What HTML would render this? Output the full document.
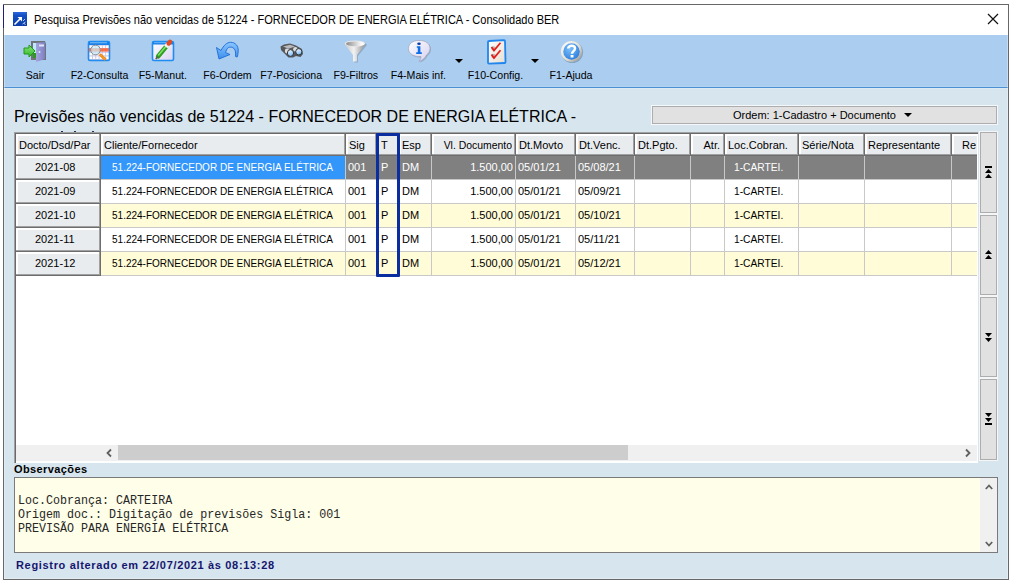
<!DOCTYPE html><html><head><meta charset="utf-8"><style>
html,body{margin:0;padding:0;}
body{width:1013px;height:584px;position:relative;overflow:hidden;background:#fff;font-family:"Liberation Sans",sans-serif;}
div{position:absolute;box-sizing:border-box;}
.t{font-size:11px;line-height:20px;white-space:nowrap;color:#000;}
svg{position:absolute;overflow:visible;}
</style></head><body>

<div style="left:3px;top:4px;width:1006px;height:576px;border:1px solid #676767;background:#d6e5ee;"></div>
<div style="left:3px;top:5px;width:1px;height:23px;background:#1f1f7a;"></div>
<div style="left:4px;top:5px;width:1004px;height:30px;background:#fff;"></div>
<svg style="left:13px;top:12px" width="14" height="14" viewBox="0 0 14 14">
<defs><linearGradient id="gti" x1="0" y1="0" x2="0" y2="1"><stop offset="0" stop-color="#2a68dc"/><stop offset="0.25" stop-color="#1450c4"/><stop offset="1" stop-color="#0b3ca8"/></linearGradient></defs>
<rect x="0" y="0" width="14" height="14" fill="url(#gti)"/>
<path d="M1.5 12.5 L8 6" stroke="#fff" stroke-width="1.6"/>
<path d="M4.5 5 L9 5 L9 9.5 Z" fill="#fff"/>
<path d="M10 9 l2 -2 M9.5 12 l3 -2 M11 11.5 l1.5 1" stroke="#b9cdf0" stroke-width="1"/>
</svg>
<div class="t" style="left:34px;top:10px;font-size:12px;transform:scaleX(0.918);transform-origin:0 0;">Pesquisa Previsões não vencidas de 51224 - FORNECEDOR DE ENERGIA ELÉTRICA - Consolidado BER</div>
<svg style="left:987px;top:13px" width="12" height="12" viewBox="0 0 12 12">
<path d="M1 1 L11 11 M11 1 L1 11" stroke="#111" stroke-width="1.2"/>
</svg>
<div style="left:4px;top:35px;width:1004px;height:52px;background:#abcdef;"></div>
<div style="left:4px;top:86px;width:1004px;height:1px;background:#b3d3f3;"></div>
<div style="left:4px;top:87px;width:1004px;height:1px;background:#4b90d0;"></div>
<div style="left:4px;top:88px;width:1004px;height:1px;background:#dcebf3;"></div>
<div class="t" style="left:-24.8px;width:120px;text-align:center;top:65px;font-size:10.6px;">Sair</div>
<div class="t" style="left:39.5px;width:120px;text-align:center;top:65px;font-size:10.6px;">F2-Consulta</div>
<div class="t" style="left:102.8px;width:120px;text-align:center;top:65px;font-size:10.6px;">F5-Manut.</div>
<div class="t" style="left:167.5px;width:120px;text-align:center;top:65px;font-size:10.6px;">F6-Ordem</div>
<div class="t" style="left:231.2px;width:120px;text-align:center;top:65px;font-size:10.6px;">F7-Posiciona</div>
<div class="t" style="left:295.8px;width:120px;text-align:center;top:65px;font-size:10.6px;">F9-Filtros</div>
<div class="t" style="left:358.4px;width:120px;text-align:center;top:65px;font-size:10.6px;">F4-Mais inf.</div>
<div class="t" style="left:435.5px;width:120px;text-align:center;top:65px;font-size:10.6px;">F10-Config.</div>
<div class="t" style="left:511.0px;width:120px;text-align:center;top:65px;font-size:10.6px;">F1-Ajuda</div>
<svg style="left:0;top:0" width="1013" height="100" viewBox="0 0 1013 100">
<defs>
<linearGradient id="gwin" x1="0" y1="0" x2="1" y2="1"><stop offset="0" stop-color="#ffffff"/><stop offset="1" stop-color="#d8d4f4"/></linearGradient>
<linearGradient id="garr" x1="0" y1="0" x2="0" y2="1"><stop offset="0" stop-color="#8fe27a"/><stop offset="1" stop-color="#2fb82a"/></linearGradient>
<linearGradient id="gdoor" x1="0" y1="0" x2="1" y2="0"><stop offset="0" stop-color="#a4a6e0"/><stop offset="1" stop-color="#7d7fc2"/></linearGradient>
<radialGradient id="ghelp" cx="0.4" cy="0.35" r="0.7"><stop offset="0" stop-color="#7cc0fa"/><stop offset="1" stop-color="#2a7ee0"/></radialGradient>
<linearGradient id="gfun" x1="0" y1="0" x2="1" y2="0"><stop offset="0" stop-color="#a8a8a8"/><stop offset="0.6" stop-color="#f4f4f4"/><stop offset="1" stop-color="#bdbdbd"/></linearGradient>
<linearGradient id="garc" x1="0" y1="0" x2="0" y2="1"><stop offset="0" stop-color="#8cc6ff"/><stop offset="1" stop-color="#3a8fec"/></linearGradient>
<linearGradient id="gfun2" x1="0" y1="0" x2="1" y2="0"><stop offset="0" stop-color="#c8c8c8"/><stop offset="0.45" stop-color="#f2f2f2"/><stop offset="1" stop-color="#8e8e8e"/></linearGradient>
<linearGradient id="gfun3" x1="0" y1="0" x2="1" y2="0"><stop offset="0" stop-color="#8a8a8a"/><stop offset="0.8" stop-color="#f4f4f4"/><stop offset="1" stop-color="#ffffff"/></linearGradient>
<linearGradient id="ginfo" x1="0" y1="0" x2="1" y2="1"><stop offset="0" stop-color="#ffffff"/><stop offset="1" stop-color="#d4d0f0"/></linearGradient>
<linearGradient id="gchk" x1="0" y1="0" x2="1" y2="1"><stop offset="0" stop-color="#ffffff"/><stop offset="1" stop-color="#e6ddd0"/></linearGradient>
<linearGradient id="gring" x1="0" y1="0" x2="1" y2="1"><stop offset="0" stop-color="#ffffff"/><stop offset="0.6" stop-color="#dedad0"/><stop offset="1" stop-color="#8c8a84"/></linearGradient>
<linearGradient id="glens" x1="0" y1="0" x2="0.4" y2="1"><stop offset="0" stop-color="#ffffff"/><stop offset="0.5" stop-color="#bfe0ff"/><stop offset="1" stop-color="#80bdf5"/></linearGradient>
</defs>
<!-- Sair: door -->
<path d="M31 41 L45 41 L46 44 L46 60 L31 60 Z" fill="#707478"/>
<rect x="33" y="43" width="4" height="15" fill="#bfe8ff"/>
<rect x="33" y="53" width="4" height="5" fill="#2e9a22"/>
<path d="M36 43 L45 42 L45 59 L36 62 Z" fill="url(#gdoor)"/>
<rect x="39" y="44.5" width="5" height="2" fill="#e4e6ff"/>
<circle cx="39.5" cy="52" r="1" fill="#dddfff"/>
<path d="M24 48 L29 48 L29 45 L35 51 L29 57 L29 54 L24 54 Z" fill="url(#garr)" stroke="#1f9a14" stroke-width="1"/>
<!-- F2: consulta -->
<rect x="88.5" y="41.5" width="21" height="19" rx="1.5" fill="#c9c6e6" stroke="#1e8cf0" stroke-width="1.6"/>
<rect x="89" y="42" width="20" height="3" fill="#1a7fe6"/>
<rect x="90" y="42.4" width="17" height="0.8" fill="#8fd0ff"/>
<rect x="89.6" y="45.6" width="2.4" height="2.6" fill="#ffffff"/><rect x="92.9" y="45.6" width="2.4" height="2.6" fill="#ffffff"/><rect x="96.2" y="45.6" width="2.4" height="2.6" fill="#ffffff"/><rect x="99.5" y="45.6" width="2.4" height="2.6" fill="#ffffff"/><rect x="102.8" y="45.6" width="2.4" height="2.6" fill="#ffffff"/><rect x="106.1" y="45.6" width="2.4" height="2.6" fill="#ffffff"/><rect x="89.6" y="49.2" width="2.4" height="2.6" fill="#ffffff"/><rect x="92.9" y="49.2" width="2.4" height="2.6" fill="#ffffff"/><rect x="96.2" y="49.2" width="2.4" height="2.6" fill="#ffffff"/><rect x="99.5" y="49.2" width="2.4" height="2.6" fill="#ffffff"/><rect x="102.8" y="49.2" width="2.4" height="2.6" fill="#ffffff"/><rect x="106.1" y="49.2" width="2.4" height="2.6" fill="#ffffff"/><rect x="89.6" y="52.8" width="2.4" height="2.6" fill="#ffffff"/><rect x="92.9" y="52.8" width="2.4" height="2.6" fill="#ffffff"/><rect x="96.2" y="52.8" width="2.4" height="2.6" fill="#ffffff"/><rect x="99.5" y="52.8" width="2.4" height="2.6" fill="#ffffff"/><rect x="102.8" y="52.8" width="2.4" height="2.6" fill="#ffffff"/><rect x="106.1" y="52.8" width="2.4" height="2.6" fill="#ffffff"/><rect x="89.6" y="56.4" width="2.4" height="2.6" fill="#ffffff"/><rect x="92.9" y="56.4" width="2.4" height="2.6" fill="#ffffff"/><rect x="96.2" y="56.4" width="2.4" height="2.6" fill="#ffffff"/><rect x="99.5" y="56.4" width="2.4" height="2.6" fill="#ffffff"/><rect x="102.8" y="56.4" width="2.4" height="2.6" fill="#ffffff"/><rect x="106.1" y="56.4" width="2.4" height="2.6" fill="#ffffff"/>
<rect x="89" y="48.2" width="20" height="3.4" fill="#ff5a2a" fill-opacity="0.85"/>
<circle cx="95.5" cy="50" r="4.8" fill="#c8eefa" fill-opacity="0.7" stroke="#8a8f99" stroke-width="1"/>
<path d="M99.8 54.2 L105.5 59.8" stroke="#f08a1a" stroke-width="3"/>
<path d="M101 55.4 L104.6 59" stroke="#ffd040" stroke-width="1" stroke-dasharray="1 1"/>
<!-- F5: manut -->
<rect x="152.5" y="41.5" width="21" height="19" rx="1.5" fill="url(#gwin)" stroke="#1e8cf0" stroke-width="1.6"/>
<rect x="153" y="42" width="20" height="2.5" fill="#1a7fe6"/>
<rect x="154" y="42.3" width="12" height="0.8" fill="#7cc0ff"/>
<path d="M158.2 56.2 L166.2 46.6" stroke="#2f9c22" stroke-width="4.6" stroke-linecap="round"/>
<path d="M158.6 55 L165.8 46.4" stroke="#7ee06a" stroke-width="1.6" stroke-linecap="round"/>
<path d="M165.8 46.8 L168.2 43.9" stroke="#f4f4f4" stroke-width="4.4"/>
<path d="M168.6 43.5 L170 41.8" stroke="#e24a22" stroke-width="4.4" stroke-linecap="round"/>
<path d="M155.8 59 L157.6 56.8" stroke="#5a5a5a" stroke-width="1.6"/>
<!-- F6: ordem arrow -->
<path d="M221 50.5 C223.5 45.5 227 42.3 230.5 42.3 C235.5 42.3 238.5 46 238.2 51 C238 54 237.6 56 237.2 57 L235.6 56.5 C235.8 53 235.5 50 234 48.5 C232.5 47 230 46.8 228.5 47.5 C227 48.3 226 51 225.5 52.5 L230 54.5 L219 59 L216.5 47.5 Z" fill="url(#garc)" stroke="#1c6ad6" stroke-width="0.9" stroke-linejoin="round"/>
<!-- F7: binoculars -->
<path d="M280.5 46.5 L284 44.5 L290 43.5 L296 45.5 L302 49 L303 54 L300.5 57 L296 56 L293 57.5 L288.5 57.5 L284 53 L281 50 Z" fill="#55575b"/>
<path d="M283 46.5 L290 44.8 L295 46.5 L288.5 48.8 Z" fill="#b8b9bb"/>
<ellipse cx="287" cy="51" rx="2.2" ry="2.4" fill="#dcdcdc"/>
<ellipse cx="295.3" cy="49.3" rx="2.2" ry="2.2" fill="#dcdcdc"/>
<ellipse cx="290.5" cy="53" rx="3.1" ry="3.4" fill="url(#glens)" stroke="#333538" stroke-width="1"/>
<ellipse cx="298.8" cy="51.8" rx="3.1" ry="3.2" fill="url(#glens)" stroke="#333538" stroke-width="1"/>
<!-- F9: funnel -->
<path d="M346 45 C346 41.5 367 41.5 367 45 L358 56 L358 62.5 L354.5 62.5 L354.5 56 Z" fill="#7f95aa" fill-opacity="0.6"/>
<path d="M344.5 44 C344.5 40 365.5 40 365.5 44 L357 55 L357 61.5 L353 61.5 L353 55 Z" fill="url(#gfun2)"/>
<ellipse cx="355" cy="43.6" rx="10.2" ry="3.2" fill="#e8e8e8"/>
<ellipse cx="355" cy="43.8" rx="9" ry="2.4" fill="url(#gfun3)"/>
<!-- F4: info bubble -->
<path d="M420 41.5 C427 41.5 431 44.5 431 49.5 C431 52.5 429.5 54.5 427.5 56 C426.5 58.5 424 61 420 62.5 C421.5 60.5 422 59 422 57.5 C415 58 409.5 55 409.5 49.5 C409.5 44.5 414 41.5 420 41.5 Z" fill="#7f95aa" fill-opacity="0.55"/>
<path d="M419 40.5 C426 40.5 430 43.5 430 48.5 C430 51.5 428.5 53.5 426.5 55 C425.5 57.5 423 60 419 61.5 C420.5 59.5 421 58 421 56.5 C414 57 408.5 54 408.5 48.5 C408.5 43.5 413 40.5 419 40.5 Z" fill="url(#ginfo)" stroke="#9a98b0" stroke-width="0.6"/>
<ellipse cx="419" cy="43.8" rx="1.8" ry="1.3" fill="#0a3fa8"/>
<path d="M416.8 46.2 H420.4 V52.2 H421.8 V54 H416.2 V52.2 H417.8 V47.8 H416.8 Z" fill="#0e6ee6"/>
<!-- F10: config checklist -->
<path d="M489 41 L504 40.2 Q505 40.2 505 41.2 L505.5 62 Q505.5 63 504.5 63 L489 63.6 Q488 63.6 488 62.6 L488 42 Q488 41 489 41 Z" fill="url(#gchk)" stroke="#1e86ee" stroke-width="1.8"/>
<circle cx="493.5" cy="48.5" r="2.2" fill="#b9b6b0"/>
<circle cx="493.5" cy="56" r="2.2" fill="#b9b6b0"/>
<path d="M491.5 47 L494 50.5 L500.5 42.8" fill="none" stroke="#e41c18" stroke-width="1.7"/>
<path d="M491.5 54.5 L494 58 L500.5 50.3" fill="none" stroke="#e41c18" stroke-width="1.7"/>
<!-- F1: help -->
<circle cx="572.3" cy="52.3" r="10.8" fill="#6f8aa3" fill-opacity="0.6"/>
<circle cx="571.5" cy="51.5" r="10.6" fill="url(#gring)"/>
<circle cx="571.5" cy="51.5" r="8.2" fill="url(#ghelp)"/>
<path d="M568.2 48.4 C568.2 45 575 45 575 48.5 C575 51 572 51.2 572 53.8" fill="none" stroke="#fff" stroke-width="2.5"/>
<rect x="570.6" y="55" width="2.9" height="2.5" fill="#fff"/>
</svg>

<svg style="left:455px;top:59px" width="8" height="4" viewBox="0 0 8 4"><path d="M0 0 H8 L4 4 Z" fill="#000"/></svg>
<svg style="left:531px;top:59px" width="8" height="4" viewBox="0 0 8 4"><path d="M0 0 H8 L4 4 Z" fill="#000"/></svg>
<div style="left:4px;top:89px;width:640px;height:43px;overflow:hidden;">
<div class="t" style="left:10px;top:18px;font-size:16px;line-height:20px;">Previsões não vencidas de 51224 - FORNECEDOR DE ENERGIA ELÉTRICA -</div>
<div style="left:57px;top:42px;width:2px;height:1px;background:#2a2a50;"></div>
<div style="left:70px;top:42px;width:2px;height:1px;background:#2a2a50;"></div>
<div style="left:88px;top:42px;width:2px;height:1px;background:#2a2a50;"></div>
</div>
<div style="left:651px;top:105px;width:347px;height:20px;background:#f4f8fa;"></div>
<div style="left:652px;top:106px;width:345px;height:18px;background:#e1e1e1;border:1px solid #adadad;"></div>
<div class="t" style="left:733px;top:105px;font-size:11px;">Ordem: 1-Cadastro + Documento</div>
<svg style="left:904px;top:113px" width="8" height="4" viewBox="0 0 8 4"><path d="M0 0 H8 L4 4 Z" fill="#000"/></svg>
<div style="left:14px;top:132px;width:964px;height:331px;background:#fff;"></div>
<div style="left:14px;top:132px;width:964px;height:1px;background:#a0a0a0;"></div>
<div style="left:14px;top:132px;width:1px;height:331px;background:#a0a0a0;"></div>
<div style="left:15px;top:133px;width:963px;height:1px;background:#696969;"></div>
<div style="left:15px;top:133px;width:1px;height:330px;background:#696969;"></div>
<div style="left:16px;top:134px;width:85px;height:22px;background:#e9ecef;"></div>
<div style="left:16px;top:134px;width:85px;height:2px;background:#fff;"></div>
<div style="left:16px;top:134px;width:2px;height:20px;background:#fff;"></div>
<div style="left:16px;top:154px;width:85px;height:1px;background:#a0a0a0;"></div>
<div style="left:16px;top:155px;width:85px;height:1px;background:#6e6e6e;"></div>
<div style="left:99px;top:134px;width:1px;height:21px;background:#a0a0a0;"></div>
<div style="left:100px;top:134px;width:1px;height:22px;background:#6e6e6e;"></div>
<div style="left:101px;top:134px;width:245px;height:22px;background:#e9ecef;"></div>
<div style="left:101px;top:134px;width:245px;height:2px;background:#fff;"></div>
<div style="left:101px;top:134px;width:2px;height:20px;background:#fff;"></div>
<div style="left:101px;top:154px;width:245px;height:1px;background:#a0a0a0;"></div>
<div style="left:101px;top:155px;width:245px;height:1px;background:#6e6e6e;"></div>
<div style="left:344px;top:134px;width:1px;height:21px;background:#a0a0a0;"></div>
<div style="left:345px;top:134px;width:1px;height:22px;background:#6e6e6e;"></div>
<div style="left:346px;top:134px;width:31px;height:22px;background:#e9ecef;"></div>
<div style="left:346px;top:134px;width:31px;height:2px;background:#fff;"></div>
<div style="left:346px;top:134px;width:2px;height:20px;background:#fff;"></div>
<div style="left:346px;top:154px;width:31px;height:1px;background:#a0a0a0;"></div>
<div style="left:346px;top:155px;width:31px;height:1px;background:#6e6e6e;"></div>
<div style="left:375px;top:134px;width:1px;height:21px;background:#a0a0a0;"></div>
<div style="left:376px;top:134px;width:1px;height:22px;background:#6e6e6e;"></div>
<div style="left:377px;top:134px;width:22px;height:22px;background:#e9ecef;"></div>
<div style="left:377px;top:134px;width:22px;height:2px;background:#fff;"></div>
<div style="left:377px;top:134px;width:2px;height:20px;background:#fff;"></div>
<div style="left:377px;top:154px;width:22px;height:1px;background:#a0a0a0;"></div>
<div style="left:377px;top:155px;width:22px;height:1px;background:#6e6e6e;"></div>
<div style="left:397px;top:134px;width:1px;height:21px;background:#a0a0a0;"></div>
<div style="left:398px;top:134px;width:1px;height:22px;background:#6e6e6e;"></div>
<div style="left:399px;top:134px;width:33px;height:22px;background:#e9ecef;"></div>
<div style="left:399px;top:134px;width:33px;height:2px;background:#fff;"></div>
<div style="left:399px;top:134px;width:2px;height:20px;background:#fff;"></div>
<div style="left:399px;top:154px;width:33px;height:1px;background:#a0a0a0;"></div>
<div style="left:399px;top:155px;width:33px;height:1px;background:#6e6e6e;"></div>
<div style="left:430px;top:134px;width:1px;height:21px;background:#a0a0a0;"></div>
<div style="left:431px;top:134px;width:1px;height:22px;background:#6e6e6e;"></div>
<div style="left:432px;top:134px;width:84px;height:22px;background:#e9ecef;"></div>
<div style="left:432px;top:134px;width:84px;height:2px;background:#fff;"></div>
<div style="left:432px;top:134px;width:2px;height:20px;background:#fff;"></div>
<div style="left:432px;top:154px;width:84px;height:1px;background:#a0a0a0;"></div>
<div style="left:432px;top:155px;width:84px;height:1px;background:#6e6e6e;"></div>
<div style="left:514px;top:134px;width:1px;height:21px;background:#a0a0a0;"></div>
<div style="left:515px;top:134px;width:1px;height:22px;background:#6e6e6e;"></div>
<div style="left:516px;top:134px;width:60px;height:22px;background:#e9ecef;"></div>
<div style="left:516px;top:134px;width:60px;height:2px;background:#fff;"></div>
<div style="left:516px;top:134px;width:2px;height:20px;background:#fff;"></div>
<div style="left:516px;top:154px;width:60px;height:1px;background:#a0a0a0;"></div>
<div style="left:516px;top:155px;width:60px;height:1px;background:#6e6e6e;"></div>
<div style="left:574px;top:134px;width:1px;height:21px;background:#a0a0a0;"></div>
<div style="left:575px;top:134px;width:1px;height:22px;background:#6e6e6e;"></div>
<div style="left:576px;top:134px;width:59px;height:22px;background:#e9ecef;"></div>
<div style="left:576px;top:134px;width:59px;height:2px;background:#fff;"></div>
<div style="left:576px;top:134px;width:2px;height:20px;background:#fff;"></div>
<div style="left:576px;top:154px;width:59px;height:1px;background:#a0a0a0;"></div>
<div style="left:576px;top:155px;width:59px;height:1px;background:#6e6e6e;"></div>
<div style="left:633px;top:134px;width:1px;height:21px;background:#a0a0a0;"></div>
<div style="left:634px;top:134px;width:1px;height:22px;background:#6e6e6e;"></div>
<div style="left:635px;top:134px;width:56px;height:22px;background:#e9ecef;"></div>
<div style="left:635px;top:134px;width:56px;height:2px;background:#fff;"></div>
<div style="left:635px;top:134px;width:2px;height:20px;background:#fff;"></div>
<div style="left:635px;top:154px;width:56px;height:1px;background:#a0a0a0;"></div>
<div style="left:635px;top:155px;width:56px;height:1px;background:#6e6e6e;"></div>
<div style="left:689px;top:134px;width:1px;height:21px;background:#a0a0a0;"></div>
<div style="left:690px;top:134px;width:1px;height:22px;background:#6e6e6e;"></div>
<div style="left:691px;top:134px;width:34px;height:22px;background:#e9ecef;"></div>
<div style="left:691px;top:134px;width:34px;height:2px;background:#fff;"></div>
<div style="left:691px;top:134px;width:2px;height:20px;background:#fff;"></div>
<div style="left:691px;top:154px;width:34px;height:1px;background:#a0a0a0;"></div>
<div style="left:691px;top:155px;width:34px;height:1px;background:#6e6e6e;"></div>
<div style="left:723px;top:134px;width:1px;height:21px;background:#a0a0a0;"></div>
<div style="left:724px;top:134px;width:1px;height:22px;background:#6e6e6e;"></div>
<div style="left:725px;top:134px;width:74px;height:22px;background:#e9ecef;"></div>
<div style="left:725px;top:134px;width:74px;height:2px;background:#fff;"></div>
<div style="left:725px;top:134px;width:2px;height:20px;background:#fff;"></div>
<div style="left:725px;top:154px;width:74px;height:1px;background:#a0a0a0;"></div>
<div style="left:725px;top:155px;width:74px;height:1px;background:#6e6e6e;"></div>
<div style="left:797px;top:134px;width:1px;height:21px;background:#a0a0a0;"></div>
<div style="left:798px;top:134px;width:1px;height:22px;background:#6e6e6e;"></div>
<div style="left:799px;top:134px;width:66px;height:22px;background:#e9ecef;"></div>
<div style="left:799px;top:134px;width:66px;height:2px;background:#fff;"></div>
<div style="left:799px;top:134px;width:2px;height:20px;background:#fff;"></div>
<div style="left:799px;top:154px;width:66px;height:1px;background:#a0a0a0;"></div>
<div style="left:799px;top:155px;width:66px;height:1px;background:#6e6e6e;"></div>
<div style="left:863px;top:134px;width:1px;height:21px;background:#a0a0a0;"></div>
<div style="left:864px;top:134px;width:1px;height:22px;background:#6e6e6e;"></div>
<div style="left:865px;top:134px;width:87px;height:22px;background:#e9ecef;"></div>
<div style="left:865px;top:134px;width:87px;height:2px;background:#fff;"></div>
<div style="left:865px;top:134px;width:2px;height:20px;background:#fff;"></div>
<div style="left:865px;top:154px;width:87px;height:1px;background:#a0a0a0;"></div>
<div style="left:865px;top:155px;width:87px;height:1px;background:#6e6e6e;"></div>
<div style="left:950px;top:134px;width:1px;height:21px;background:#a0a0a0;"></div>
<div style="left:951px;top:134px;width:1px;height:22px;background:#6e6e6e;"></div>
<div style="left:952px;top:134px;width:25px;height:22px;background:#e9ecef;"></div>
<div style="left:952px;top:134px;width:25px;height:2px;background:#fff;"></div>
<div style="left:952px;top:134px;width:2px;height:20px;background:#fff;"></div>
<div style="left:952px;top:154px;width:25px;height:1px;background:#a0a0a0;"></div>
<div style="left:952px;top:155px;width:25px;height:1px;background:#6e6e6e;"></div>
<div style="left:0;top:0;width:977px;height:584px;overflow:hidden;">
<div class="t" style="left:19px;top:135px;">Docto/Dsd/Par</div>
<div class="t" style="left:104px;top:135px;">Cliente/Fornecedor</div>
<div class="t" style="left:349px;top:135px;">Sig</div>
<div class="t" style="left:381px;top:135px;">T</div>
<div class="t" style="left:402px;top:135px;">Esp</div>
<div class="t" style="left:212px;width:300px;text-align:right;top:135px;transform:scaleX(0.947);transform-origin:100% 0;">Vl. Documento</div>
<div class="t" style="left:519px;top:135px;">Dt.Movto</div>
<div class="t" style="left:579px;top:135px;">Dt.Venc.</div>
<div class="t" style="left:638px;top:135px;">Dt.Pgto.</div>
<div class="t" style="left:420px;width:300px;text-align:right;top:135px;">Atr.</div>
<div class="t" style="left:728px;top:135px;">Loc.Cobran.</div>
<div class="t" style="left:802px;top:135px;">Série/Nota</div>
<div class="t" style="left:868px;top:135px;">Representante</div>
<div class="t" style="left:962px;top:135px;">Re</div>
</div>
<div style="left:101px;top:156px;width:876px;height:23px;background:#808080;"></div>
<div style="left:101px;top:179px;width:876px;height:1px;background:#c8c8c8;"></div>
<div style="left:345px;top:156px;width:1px;height:24px;background:#c8c8c8;"></div>
<div style="left:376px;top:156px;width:1px;height:24px;background:#c8c8c8;"></div>
<div style="left:398px;top:156px;width:1px;height:24px;background:#c8c8c8;"></div>
<div style="left:431px;top:156px;width:1px;height:24px;background:#c8c8c8;"></div>
<div style="left:515px;top:156px;width:1px;height:24px;background:#c8c8c8;"></div>
<div style="left:575px;top:156px;width:1px;height:24px;background:#c8c8c8;"></div>
<div style="left:634px;top:156px;width:1px;height:24px;background:#c8c8c8;"></div>
<div style="left:690px;top:156px;width:1px;height:24px;background:#c8c8c8;"></div>
<div style="left:724px;top:156px;width:1px;height:24px;background:#c8c8c8;"></div>
<div style="left:798px;top:156px;width:1px;height:24px;background:#c8c8c8;"></div>
<div style="left:864px;top:156px;width:1px;height:24px;background:#c8c8c8;"></div>
<div style="left:951px;top:156px;width:1px;height:24px;background:#c8c8c8;"></div>
<div style="left:101px;top:156px;width:244px;height:23px;background:#3396fa;"></div>
<div style="left:16px;top:156px;width:85px;height:24px;background:#e9ecef;"></div>
<div style="left:16px;top:156px;width:84px;height:2px;background:#fff;"></div>
<div style="left:16px;top:156px;width:2px;height:22px;background:#fff;"></div>
<div style="left:16px;top:178px;width:84px;height:1px;background:#a0a0a0;"></div>
<div style="left:16px;top:179px;width:85px;height:1px;background:#6e6e6e;"></div>
<div style="left:99px;top:156px;width:1px;height:23px;background:#a0a0a0;"></div>
<div style="left:100px;top:156px;width:1px;height:24px;background:#6e6e6e;"></div>
<div class="t" style="left:35px;top:157px;">2021-08</div>
<div class="t" style="left:112px;top:157px;color:#fff;transform:scaleX(0.91);transform-origin:0 0;">51.224-FORNECEDOR DE ENERGIA ELÉTRICA</div>
<div class="t" style="left:348px;top:157px;color:#fff;">001</div>
<div class="t" style="left:381px;top:157px;color:#fff;">P</div>
<div class="t" style="left:402px;top:157px;color:#fff;">DM</div>
<div class="t" style="left:213px;width:300px;text-align:right;top:157px;color:#fff;">1.500,00</div>
<div class="t" style="left:518px;top:157px;color:#fff;">05/01/21</div>
<div class="t" style="left:578px;top:157px;color:#fff;">05/08/21</div>
<div class="t" style="left:734px;top:157px;color:#fff;transform:scaleX(0.93);transform-origin:0 0;">1-CARTEI.</div>
<div style="left:101px;top:180px;width:876px;height:23px;background:#ffffff;"></div>
<div style="left:101px;top:203px;width:876px;height:1px;background:#c8c8c8;"></div>
<div style="left:345px;top:180px;width:1px;height:24px;background:#c8c8c8;"></div>
<div style="left:376px;top:180px;width:1px;height:24px;background:#c8c8c8;"></div>
<div style="left:398px;top:180px;width:1px;height:24px;background:#c8c8c8;"></div>
<div style="left:431px;top:180px;width:1px;height:24px;background:#c8c8c8;"></div>
<div style="left:515px;top:180px;width:1px;height:24px;background:#c8c8c8;"></div>
<div style="left:575px;top:180px;width:1px;height:24px;background:#c8c8c8;"></div>
<div style="left:634px;top:180px;width:1px;height:24px;background:#c8c8c8;"></div>
<div style="left:690px;top:180px;width:1px;height:24px;background:#c8c8c8;"></div>
<div style="left:724px;top:180px;width:1px;height:24px;background:#c8c8c8;"></div>
<div style="left:798px;top:180px;width:1px;height:24px;background:#c8c8c8;"></div>
<div style="left:864px;top:180px;width:1px;height:24px;background:#c8c8c8;"></div>
<div style="left:951px;top:180px;width:1px;height:24px;background:#c8c8c8;"></div>
<div style="left:16px;top:180px;width:85px;height:24px;background:#e9ecef;"></div>
<div style="left:16px;top:180px;width:84px;height:2px;background:#fff;"></div>
<div style="left:16px;top:180px;width:2px;height:22px;background:#fff;"></div>
<div style="left:16px;top:202px;width:84px;height:1px;background:#a0a0a0;"></div>
<div style="left:16px;top:203px;width:85px;height:1px;background:#6e6e6e;"></div>
<div style="left:99px;top:180px;width:1px;height:23px;background:#a0a0a0;"></div>
<div style="left:100px;top:180px;width:1px;height:24px;background:#6e6e6e;"></div>
<div class="t" style="left:35px;top:181px;">2021-09</div>
<div class="t" style="left:112px;top:181px;color:#000;transform:scaleX(0.91);transform-origin:0 0;">51.224-FORNECEDOR DE ENERGIA ELÉTRICA</div>
<div class="t" style="left:348px;top:181px;color:#000;">001</div>
<div class="t" style="left:381px;top:181px;color:#000;">P</div>
<div class="t" style="left:402px;top:181px;color:#000;">DM</div>
<div class="t" style="left:213px;width:300px;text-align:right;top:181px;color:#000;">1.500,00</div>
<div class="t" style="left:518px;top:181px;color:#000;">05/01/21</div>
<div class="t" style="left:578px;top:181px;color:#000;">05/09/21</div>
<div class="t" style="left:734px;top:181px;color:#000;transform:scaleX(0.93);transform-origin:0 0;">1-CARTEI.</div>
<div style="left:101px;top:204px;width:876px;height:23px;background:#fffcd7;"></div>
<div style="left:101px;top:227px;width:876px;height:1px;background:#c8c8c8;"></div>
<div style="left:345px;top:204px;width:1px;height:24px;background:#c8c8c8;"></div>
<div style="left:376px;top:204px;width:1px;height:24px;background:#c8c8c8;"></div>
<div style="left:398px;top:204px;width:1px;height:24px;background:#c8c8c8;"></div>
<div style="left:431px;top:204px;width:1px;height:24px;background:#c8c8c8;"></div>
<div style="left:515px;top:204px;width:1px;height:24px;background:#c8c8c8;"></div>
<div style="left:575px;top:204px;width:1px;height:24px;background:#c8c8c8;"></div>
<div style="left:634px;top:204px;width:1px;height:24px;background:#c8c8c8;"></div>
<div style="left:690px;top:204px;width:1px;height:24px;background:#c8c8c8;"></div>
<div style="left:724px;top:204px;width:1px;height:24px;background:#c8c8c8;"></div>
<div style="left:798px;top:204px;width:1px;height:24px;background:#c8c8c8;"></div>
<div style="left:864px;top:204px;width:1px;height:24px;background:#c8c8c8;"></div>
<div style="left:951px;top:204px;width:1px;height:24px;background:#c8c8c8;"></div>
<div style="left:16px;top:204px;width:85px;height:24px;background:#e9ecef;"></div>
<div style="left:16px;top:204px;width:84px;height:2px;background:#fff;"></div>
<div style="left:16px;top:204px;width:2px;height:22px;background:#fff;"></div>
<div style="left:16px;top:226px;width:84px;height:1px;background:#a0a0a0;"></div>
<div style="left:16px;top:227px;width:85px;height:1px;background:#6e6e6e;"></div>
<div style="left:99px;top:204px;width:1px;height:23px;background:#a0a0a0;"></div>
<div style="left:100px;top:204px;width:1px;height:24px;background:#6e6e6e;"></div>
<div class="t" style="left:35px;top:205px;">2021-10</div>
<div class="t" style="left:112px;top:205px;color:#000;transform:scaleX(0.91);transform-origin:0 0;">51.224-FORNECEDOR DE ENERGIA ELÉTRICA</div>
<div class="t" style="left:348px;top:205px;color:#000;">001</div>
<div class="t" style="left:381px;top:205px;color:#000;">P</div>
<div class="t" style="left:402px;top:205px;color:#000;">DM</div>
<div class="t" style="left:213px;width:300px;text-align:right;top:205px;color:#000;">1.500,00</div>
<div class="t" style="left:518px;top:205px;color:#000;">05/01/21</div>
<div class="t" style="left:578px;top:205px;color:#000;">05/10/21</div>
<div class="t" style="left:734px;top:205px;color:#000;transform:scaleX(0.93);transform-origin:0 0;">1-CARTEI.</div>
<div style="left:101px;top:228px;width:876px;height:23px;background:#ffffff;"></div>
<div style="left:101px;top:251px;width:876px;height:1px;background:#c8c8c8;"></div>
<div style="left:345px;top:228px;width:1px;height:24px;background:#c8c8c8;"></div>
<div style="left:376px;top:228px;width:1px;height:24px;background:#c8c8c8;"></div>
<div style="left:398px;top:228px;width:1px;height:24px;background:#c8c8c8;"></div>
<div style="left:431px;top:228px;width:1px;height:24px;background:#c8c8c8;"></div>
<div style="left:515px;top:228px;width:1px;height:24px;background:#c8c8c8;"></div>
<div style="left:575px;top:228px;width:1px;height:24px;background:#c8c8c8;"></div>
<div style="left:634px;top:228px;width:1px;height:24px;background:#c8c8c8;"></div>
<div style="left:690px;top:228px;width:1px;height:24px;background:#c8c8c8;"></div>
<div style="left:724px;top:228px;width:1px;height:24px;background:#c8c8c8;"></div>
<div style="left:798px;top:228px;width:1px;height:24px;background:#c8c8c8;"></div>
<div style="left:864px;top:228px;width:1px;height:24px;background:#c8c8c8;"></div>
<div style="left:951px;top:228px;width:1px;height:24px;background:#c8c8c8;"></div>
<div style="left:16px;top:228px;width:85px;height:24px;background:#e9ecef;"></div>
<div style="left:16px;top:228px;width:84px;height:2px;background:#fff;"></div>
<div style="left:16px;top:228px;width:2px;height:22px;background:#fff;"></div>
<div style="left:16px;top:250px;width:84px;height:1px;background:#a0a0a0;"></div>
<div style="left:16px;top:251px;width:85px;height:1px;background:#6e6e6e;"></div>
<div style="left:99px;top:228px;width:1px;height:23px;background:#a0a0a0;"></div>
<div style="left:100px;top:228px;width:1px;height:24px;background:#6e6e6e;"></div>
<div class="t" style="left:35px;top:229px;">2021-11</div>
<div class="t" style="left:112px;top:229px;color:#000;transform:scaleX(0.91);transform-origin:0 0;">51.224-FORNECEDOR DE ENERGIA ELÉTRICA</div>
<div class="t" style="left:348px;top:229px;color:#000;">001</div>
<div class="t" style="left:381px;top:229px;color:#000;">P</div>
<div class="t" style="left:402px;top:229px;color:#000;">DM</div>
<div class="t" style="left:213px;width:300px;text-align:right;top:229px;color:#000;">1.500,00</div>
<div class="t" style="left:518px;top:229px;color:#000;">05/01/21</div>
<div class="t" style="left:578px;top:229px;color:#000;">05/11/21</div>
<div class="t" style="left:734px;top:229px;color:#000;transform:scaleX(0.93);transform-origin:0 0;">1-CARTEI.</div>
<div style="left:101px;top:252px;width:876px;height:23px;background:#fffcd7;"></div>
<div style="left:101px;top:275px;width:876px;height:1px;background:#c8c8c8;"></div>
<div style="left:345px;top:252px;width:1px;height:24px;background:#c8c8c8;"></div>
<div style="left:376px;top:252px;width:1px;height:24px;background:#c8c8c8;"></div>
<div style="left:398px;top:252px;width:1px;height:24px;background:#c8c8c8;"></div>
<div style="left:431px;top:252px;width:1px;height:24px;background:#c8c8c8;"></div>
<div style="left:515px;top:252px;width:1px;height:24px;background:#c8c8c8;"></div>
<div style="left:575px;top:252px;width:1px;height:24px;background:#c8c8c8;"></div>
<div style="left:634px;top:252px;width:1px;height:24px;background:#c8c8c8;"></div>
<div style="left:690px;top:252px;width:1px;height:24px;background:#c8c8c8;"></div>
<div style="left:724px;top:252px;width:1px;height:24px;background:#c8c8c8;"></div>
<div style="left:798px;top:252px;width:1px;height:24px;background:#c8c8c8;"></div>
<div style="left:864px;top:252px;width:1px;height:24px;background:#c8c8c8;"></div>
<div style="left:951px;top:252px;width:1px;height:24px;background:#c8c8c8;"></div>
<div style="left:16px;top:252px;width:85px;height:24px;background:#e9ecef;"></div>
<div style="left:16px;top:252px;width:84px;height:2px;background:#fff;"></div>
<div style="left:16px;top:252px;width:2px;height:22px;background:#fff;"></div>
<div style="left:16px;top:274px;width:84px;height:1px;background:#a0a0a0;"></div>
<div style="left:16px;top:275px;width:85px;height:1px;background:#6e6e6e;"></div>
<div style="left:99px;top:252px;width:1px;height:23px;background:#a0a0a0;"></div>
<div style="left:100px;top:252px;width:1px;height:24px;background:#6e6e6e;"></div>
<div class="t" style="left:35px;top:253px;">2021-12</div>
<div class="t" style="left:112px;top:253px;color:#000;transform:scaleX(0.91);transform-origin:0 0;">51.224-FORNECEDOR DE ENERGIA ELÉTRICA</div>
<div class="t" style="left:348px;top:253px;color:#000;">001</div>
<div class="t" style="left:381px;top:253px;color:#000;">P</div>
<div class="t" style="left:402px;top:253px;color:#000;">DM</div>
<div class="t" style="left:213px;width:300px;text-align:right;top:253px;color:#000;">1.500,00</div>
<div class="t" style="left:518px;top:253px;color:#000;">05/01/21</div>
<div class="t" style="left:578px;top:253px;color:#000;">05/12/21</div>
<div class="t" style="left:734px;top:253px;color:#000;transform:scaleX(0.93);transform-origin:0 0;">1-CARTEI.</div>
<div style="left:376px;top:133px;width:24px;height:144px;border:3px solid #0a2da0;border-radius:1px;"></div>
<div style="left:16px;top:445px;width:961px;height:16px;background:#f0f0f0;"></div>
<div style="left:118px;top:445px;width:510px;height:15px;background:#cdcdcd;"></div>
<svg style="left:106px;top:449px" width="6" height="8" viewBox="0 0 6 8"><path d="M5 0.5 L1.5 4 L5 7.5" stroke="#606060" stroke-width="1.8" fill="none"/></svg>
<svg style="left:965px;top:449px" width="6" height="8" viewBox="0 0 6 8"><path d="M1 0.5 L4.5 4 L1 7.5" stroke="#606060" stroke-width="1.8" fill="none"/></svg>
<div style="left:979px;top:131px;width:19px;height:83px;background:#f4f6f8;"></div>
<div style="left:979px;top:214px;width:19px;height:82px;background:#f4f6f8;"></div>
<div style="left:979px;top:296px;width:19px;height:82px;background:#f4f6f8;"></div>
<div style="left:979px;top:378px;width:19px;height:83px;background:#f4f6f8;"></div>
<div style="left:980px;top:132px;width:17px;height:81px;background:#e1e1e1;border:1px solid #adadad;"></div>
<div style="left:980px;top:215px;width:17px;height:80px;background:#e1e1e1;border:1px solid #adadad;"></div>
<div style="left:980px;top:297px;width:17px;height:80px;background:#e1e1e1;border:1px solid #adadad;"></div>
<div style="left:980px;top:379px;width:17px;height:81px;background:#e1e1e1;border:1px solid #adadad;"></div>
<svg style="left:0;top:0" width="1013" height="584"><rect x="985" y="166" width="7" height="2" fill="#000"/><path d="M985 173 L988.5 169 L992 173 Z" fill="#000"/><path d="M985 178 L988.5 174 L992 178 Z" fill="#000"/><path d="M985 254 L988.5 250 L992 254 Z" fill="#000"/><path d="M985 259 L988.5 255 L992 259 Z" fill="#000"/><path d="M985 333 L988.5 337 L992 333 Z" fill="#000"/><path d="M985 338 L988.5 342 L992 338 Z" fill="#000"/><path d="M985 413 L988.5 417 L992 413 Z" fill="#000"/><path d="M985 418 L988.5 422 L992 418 Z" fill="#000"/><rect x="985" y="423" width="7" height="2" fill="#000"/></svg>
<div class="t" style="left:14px;top:459px;font-weight:bold;font-size:11px;letter-spacing:0.4px;">Observações</div>
<div style="left:14px;top:477px;width:984px;height:76px;background:#fffee8;border:1px solid #7a7a7a;"></div>
<div style="left:980px;top:478px;width:17px;height:74px;background:#f0f0f0;"></div>
<svg style="left:985px;top:484px" width="8" height="6" viewBox="0 0 8 6"><path d="M0.8 5 L4 1.5 L7.2 5" stroke="#606060" stroke-width="1.8" fill="none"/></svg>
<svg style="left:985px;top:541px" width="8" height="6" viewBox="0 0 8 6"><path d="M0.8 1 L4 4.5 L7.2 1" stroke="#606060" stroke-width="1.8" fill="none"/></svg>
<div class="t" style="left:18px;top:491px;font-family:'Liberation Mono',monospace;font-size:12px;color:#262626;transform:scaleX(0.973);transform-origin:0 0;">Loc.Cobrança: CARTEIRA</div>
<div class="t" style="left:18px;top:505px;font-family:'Liberation Mono',monospace;font-size:12px;color:#262626;transform:scaleX(0.973);transform-origin:0 0;">Origem doc.: Digitação de previsões Sigla: 001</div>
<div class="t" style="left:18px;top:519px;font-family:'Liberation Mono',monospace;font-size:12px;color:#262626;transform:scaleX(0.973);transform-origin:0 0;">PREVISÃO PARA ENERGIA ELÉTRICA</div>
<div class="t" style="left:16px;top:555px;font-weight:bold;color:#16166e;letter-spacing:0.67px;">Registro alterado em 22/07/2021 às 08:13:28</div>
<div style="left:4px;top:35px;width:1px;height:544px;background:rgba(255,255,255,0.3);"></div>
<div style="left:1007px;top:35px;width:1px;height:544px;background:rgba(255,255,255,0.3);"></div>
<div style="left:4px;top:578px;width:1004px;height:1px;background:rgba(255,255,255,0.3);"></div>
</body></html>
